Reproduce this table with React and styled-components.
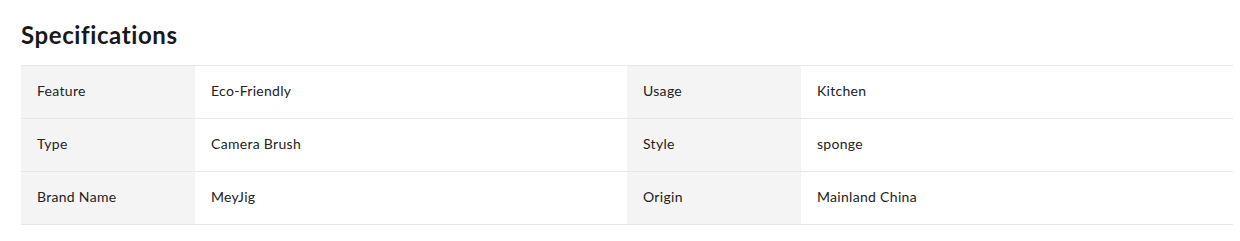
import React from "react";
import styled, { createGlobalStyle } from "styled-components";

const Global = createGlobalStyle`
  html, body { margin: 0; padding: 0; background: #fff; }
  body { font-family: "Lato", "Open Sans", sans-serif; color: #222; }
`;

const Section = styled.section`
  padding: 19px 0 0 21px;
  width: 1212px;
`;

const Title = styled.h2`
  margin: 0 0 14px;
  font-size: 24px;
  line-height: 32px;
  font-weight: 700;
  color: #191919;
  letter-spacing: 0.6px;
`;

const Table = styled.div`
  display: grid;
  grid-template-columns: 174px 432px 174px 1fr;
  border-top: 1px solid #e8e8e8;
`;

const Cell = styled.div`
  height: 52px;
  box-sizing: border-box;
  display: flex;
  align-items: center;
  padding: 0 16px 3px;
  font-size: 14px;
  letter-spacing: 0.3px;
  color: #222;
  border-bottom: 1px solid #e8e8e8;
  height: 53px;
  background: ${(p) => (p.$label ? "#f4f4f4" : "#fff")};
`;

const rows = [
  ["Feature", "Eco-Friendly", "Usage", "Kitchen"],
  ["Type", "Camera Brush", "Style", "sponge"],
  ["Brand Name", "MeyJig", "Origin", "Mainland China"],
];

export default function App() {
  return (
    <>
      <Global />
      <Section>
        <Title>Specifications</Title>
        <Table>
          {rows.map((r, i) =>
            r.map((t, j) => (
              <Cell key={`${i}-${j}`} $label={j % 2 === 0}>
                {t}
              </Cell>
            ))
          )}
        </Table>
      </Section>
    </>
  );
}
